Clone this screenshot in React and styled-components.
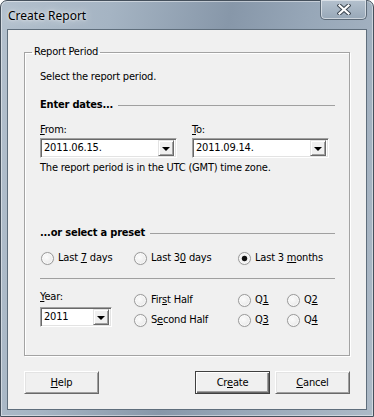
import React, { useState } from 'react';
import styled, { createGlobalStyle } from 'styled-components';

const GlobalStyle = createGlobalStyle`
  html, body {
    margin: 0;
    padding: 0;
    background: #ffffff;
  }
`;

const uiFont = `"DejaVu Sans Condensed", "Liberation Sans", sans-serif`;

const Window = styled.div`
  box-sizing: border-box;
  width: 374px;
  height: 417px;
  display: flex;
  flex-direction: column;
  padding: 0 6px 6px;
  border: 1px solid #45505c;
  border-radius: 7px 7px 0 0;
  background: linear-gradient(
    100deg,
    #b3c0cd 0%,
    #a5b4c3 25%,
    #8797a9 52%,
    #97a7b8 70%,
    #adbac7 100%
  );
  box-shadow: inset 0 0 0 1px rgba(255, 255, 255, 0.45);
`;

const TitleBar = styled.div`
  height: 28px;
  display: flex;
  justify-content: space-between;
  align-items: flex-start;
`;

const Title = styled.span`
  margin: 7px 0 0 1px;
  font: 12px/16px "Noto Sans", "Liberation Sans", sans-serif;
  color: #000;
  text-shadow: 0 0 8px rgba(255, 255, 255, 0.9), 0 0 3px rgba(255, 255, 255, 0.8);
`;

const CloseButton = styled.button`
  width: 47px;
  height: 20px;
  margin-top: -1px;
  padding: 0;
  display: flex;
  align-items: center;
  justify-content: center;
  border: 1px solid #5c6a78;
  border-top: none;
  border-radius: 0 0 5px 5px;
  background: linear-gradient(#b4c1ce, #98a8b8);
  box-shadow: inset 0 0 0 1px rgba(255, 255, 255, 0.5);
`;

const Client = styled.div`
  flex: 1;
  display: flex;
  flex-direction: column;
  padding: 0 16px;
  border: 1px solid #5f6e7c;
  background: #f0f0f0;
  font: 11px/14px ${uiFont};
  letter-spacing: -0.2px;
  color: #000;
`;

const Group = styled.fieldset`
  margin: 15px 0 0;
  padding: 11px 14px 25px 15px;
  border: 1px solid #a3a3a3;
  box-shadow: inset 1px 1px 0 #fff, 1px 1px 0 #fff;
  min-width: 0;
`;

const Legend = styled.legend`
  margin-left: -8px;
  padding: 0 2px;
  font: 11px/14px ${uiFont};
`;

const Text = styled.div`
  margin-top: ${(p) => p.$top || 0}px;
  white-space: nowrap;
`;

const Header = styled.div`
  margin-top: ${(p) => p.$top}px;
  display: flex;
  align-items: center;
  gap: 5px;
  font-weight: bold;

  &::after {
    content: '';
    flex: 1;
    height: 1px;
    background: #a0a0a0;
  }
`;

const Rule = styled.div`
  margin-top: 13px;
  height: 1px;
  background: #a0a0a0;
`;

const DateGrid = styled.div`
  margin-top: 11px;
  display: grid;
  grid-template-columns: 137px 137px;
  column-gap: 15px;
  row-gap: 1px;
`;

const Field = styled.div`
  display: flex;
  flex-direction: column;
  gap: ${(p) => p.$gap || 1}px;
`;

const Combo = styled.div`
  box-sizing: border-box;
  width: ${(p) => p.$width}px;
  height: 20px;
  display: flex;
  align-items: center;
  border: 1px solid;
  border-color: #a0a0a0 #ffffff #ffffff #a0a0a0;
  box-shadow: inset 1px 1px 0 #696969, inset -1px -1px 0 #e3e3e3;
  background: #fff;
  padding: 2px;
`;

const ComboText = styled.span`
  flex: 1;
  padding-left: 1px;
`;

const ComboButton = styled.span`
  box-sizing: border-box;
  width: 16px;
  height: 16px;
  display: flex;
  align-items: center;
  justify-content: center;
  background: #f0f0f0;
  border: 1px solid;
  border-color: #e3e3e3 #696969 #696969 #e3e3e3;
  box-shadow: inset 1px 1px 0 #fff, inset -1px -1px 0 #a0a0a0;

  &::after {
    content: '';
    border-left: 4px solid transparent;
    border-right: 4px solid transparent;
    border-top: 4px solid #000;
    margin-top: 1px;
  }
`;

const PresetRow = styled.div`
  margin-top: 11px;
  display: grid;
  grid-template-columns: 93px 104px auto;
`;

const PeriodGrid = styled.div`
  margin-top: 11px;
  display: grid;
  grid-template-columns: 93px 104px 49px auto;
  grid-template-rows: 20px 20px;
`;

const YearField = styled(Field)`
  grid-row: 1 / span 2;
`;

const RadioLabel = styled.label`
  display: flex;
  align-items: center;
  gap: 4px;
  height: ${(p) => p.$height || 14}px;
  margin-left: 1px;
  white-space: nowrap;
  cursor: default;
`;

const RadioDot = styled.span`
  box-sizing: border-box;
  width: 13px;
  height: 13px;
  border-radius: 50%;
  border: 1px solid #9a9a9a;
  background: ${(p) =>
    p.$checked
      ? 'radial-gradient(circle, #111 0 2.2px, #555 2.6px, #f4f4f4 3.2px, #e4e4e4 100%)'
      : 'radial-gradient(circle at 40% 40%, #fcfcfc 0%, #ececec 60%, #d6d6d6 100%)'};
  box-shadow: inset 0 0 1px 1px rgba(255, 255, 255, 0.8), 0 0 1px rgba(0, 0, 0, 0.15);
`;

const ButtonBar = styled.div`
  margin-top: 15px;
  display: flex;
  gap: 5px;
`;

const Button = styled.button`
  box-sizing: border-box;
  width: 75px;
  height: 23px;
  padding: 0;
  font: 11px/14px ${uiFont};
  letter-spacing: -0.2px;
  color: #000;
  background: #f0f0f0;
  border: 1px solid;
  border-color: ${(p) => (p.$default ? '#404040' : '#ffffff #696969 #696969 #ffffff')};
  box-shadow: ${(p) =>
    p.$default
      ? 'inset 1px 1px 0 #fff, inset -1px -1px 0 #696969, inset -2px -2px 0 #a0a0a0'
      : 'inset 1px 1px 0 #e3e3e3, inset -1px -1px 0 #a0a0a0'};
  margin-right: ${(p) => (p.$push ? 'auto' : '0')};
`;

const Key = styled.u`
  text-underline-offset: 1px;
`;

const Radio = ({ checked, onSelect, children, height }) => (
  <RadioLabel $height={height} onClick={onSelect}>
    <RadioDot $checked={checked} />
    <span>{children}</span>
  </RadioLabel>
);

const DateCombo = ({ value, width }) => (
  <Combo $width={width}>
    <ComboText>{value}</ComboText>
    <ComboButton />
  </Combo>
);

const App = () => {
  const [preset, setPreset] = useState('3m');
  const [period, setPeriod] = useState(null);

  return (
    <>
      <GlobalStyle />
      <Window>
        <TitleBar>
          <Title>Create Report</Title>
          <CloseButton aria-label="Close">
            <svg width="14" height="11" viewBox="0 0 14 11">
              <path d="M2.5 1.5 L11.5 9.5 M11.5 1.5 L2.5 9.5" stroke="#3d4752" strokeWidth="4.2" strokeLinecap="square" />
              <path d="M2.5 1.5 L11.5 9.5 M11.5 1.5 L2.5 9.5" stroke="#ffffff" strokeWidth="2.2" strokeLinecap="square" />
            </svg>
          </CloseButton>
        </TitleBar>
        <Client>
          <Group>
            <Legend>Report Period</Legend>
            <Text>Select the report period.</Text>

            <Header $top={14}>Enter dates...</Header>
            <DateGrid>
              <Field>
                <span><Key>F</Key>rom:</span>
                <DateCombo value="2011.06.15." width={137} />
              </Field>
              <Field>
                <span><Key>T</Key>o:</span>
                <DateCombo value="2011.09.14." width={137} />
              </Field>
            </DateGrid>
            <Text $top={3}>The report period is in the UTC (GMT) time zone.</Text>

            <Header $top={51}>...or select a preset</Header>
            <PresetRow>
              <Radio checked={preset === '7d'} onSelect={() => setPreset('7d')}>
                Last <Key>7</Key> days
              </Radio>
              <Radio checked={preset === '30d'} onSelect={() => setPreset('30d')}>
                Last 3<Key>0</Key> days
              </Radio>
              <Radio checked={preset === '3m'} onSelect={() => setPreset('3m')}>
                Last 3 <Key>m</Key>onths
              </Radio>
            </PresetRow>
            <Rule />

            <PeriodGrid>
              <YearField $gap={3}>
                <span><Key>Y</Key>ear:</span>
                <DateCombo value="2011" width={72} />
              </YearField>
              <Radio height={20} checked={period === 'h1'} onSelect={() => setPeriod('h1')}>
                Fir<Key>s</Key>t Half
              </Radio>
              <Radio height={20} checked={period === 'q1'} onSelect={() => setPeriod('q1')}>
                Q<Key>1</Key>
              </Radio>
              <Radio height={20} checked={period === 'q2'} onSelect={() => setPeriod('q2')}>
                Q<Key>2</Key>
              </Radio>
              <Radio height={20} checked={period === 'h2'} onSelect={() => setPeriod('h2')}>
                S<Key>e</Key>cond Half
              </Radio>
              <Radio height={20} checked={period === 'q3'} onSelect={() => setPeriod('q3')}>
                Q<Key>3</Key>
              </Radio>
              <Radio height={20} checked={period === 'q4'} onSelect={() => setPeriod('q4')}>
                Q<Key>4</Key>
              </Radio>
            </PeriodGrid>
          </Group>

          <ButtonBar>
            <Button $push>
              <Key>H</Key>elp
            </Button>
            <Button $default>
              Cr<Key>e</Key>ate
            </Button>
            <Button>
              <Key>C</Key>ancel
            </Button>
          </ButtonBar>
        </Client>
      </Window>
    </>
  );
};

export default App;
